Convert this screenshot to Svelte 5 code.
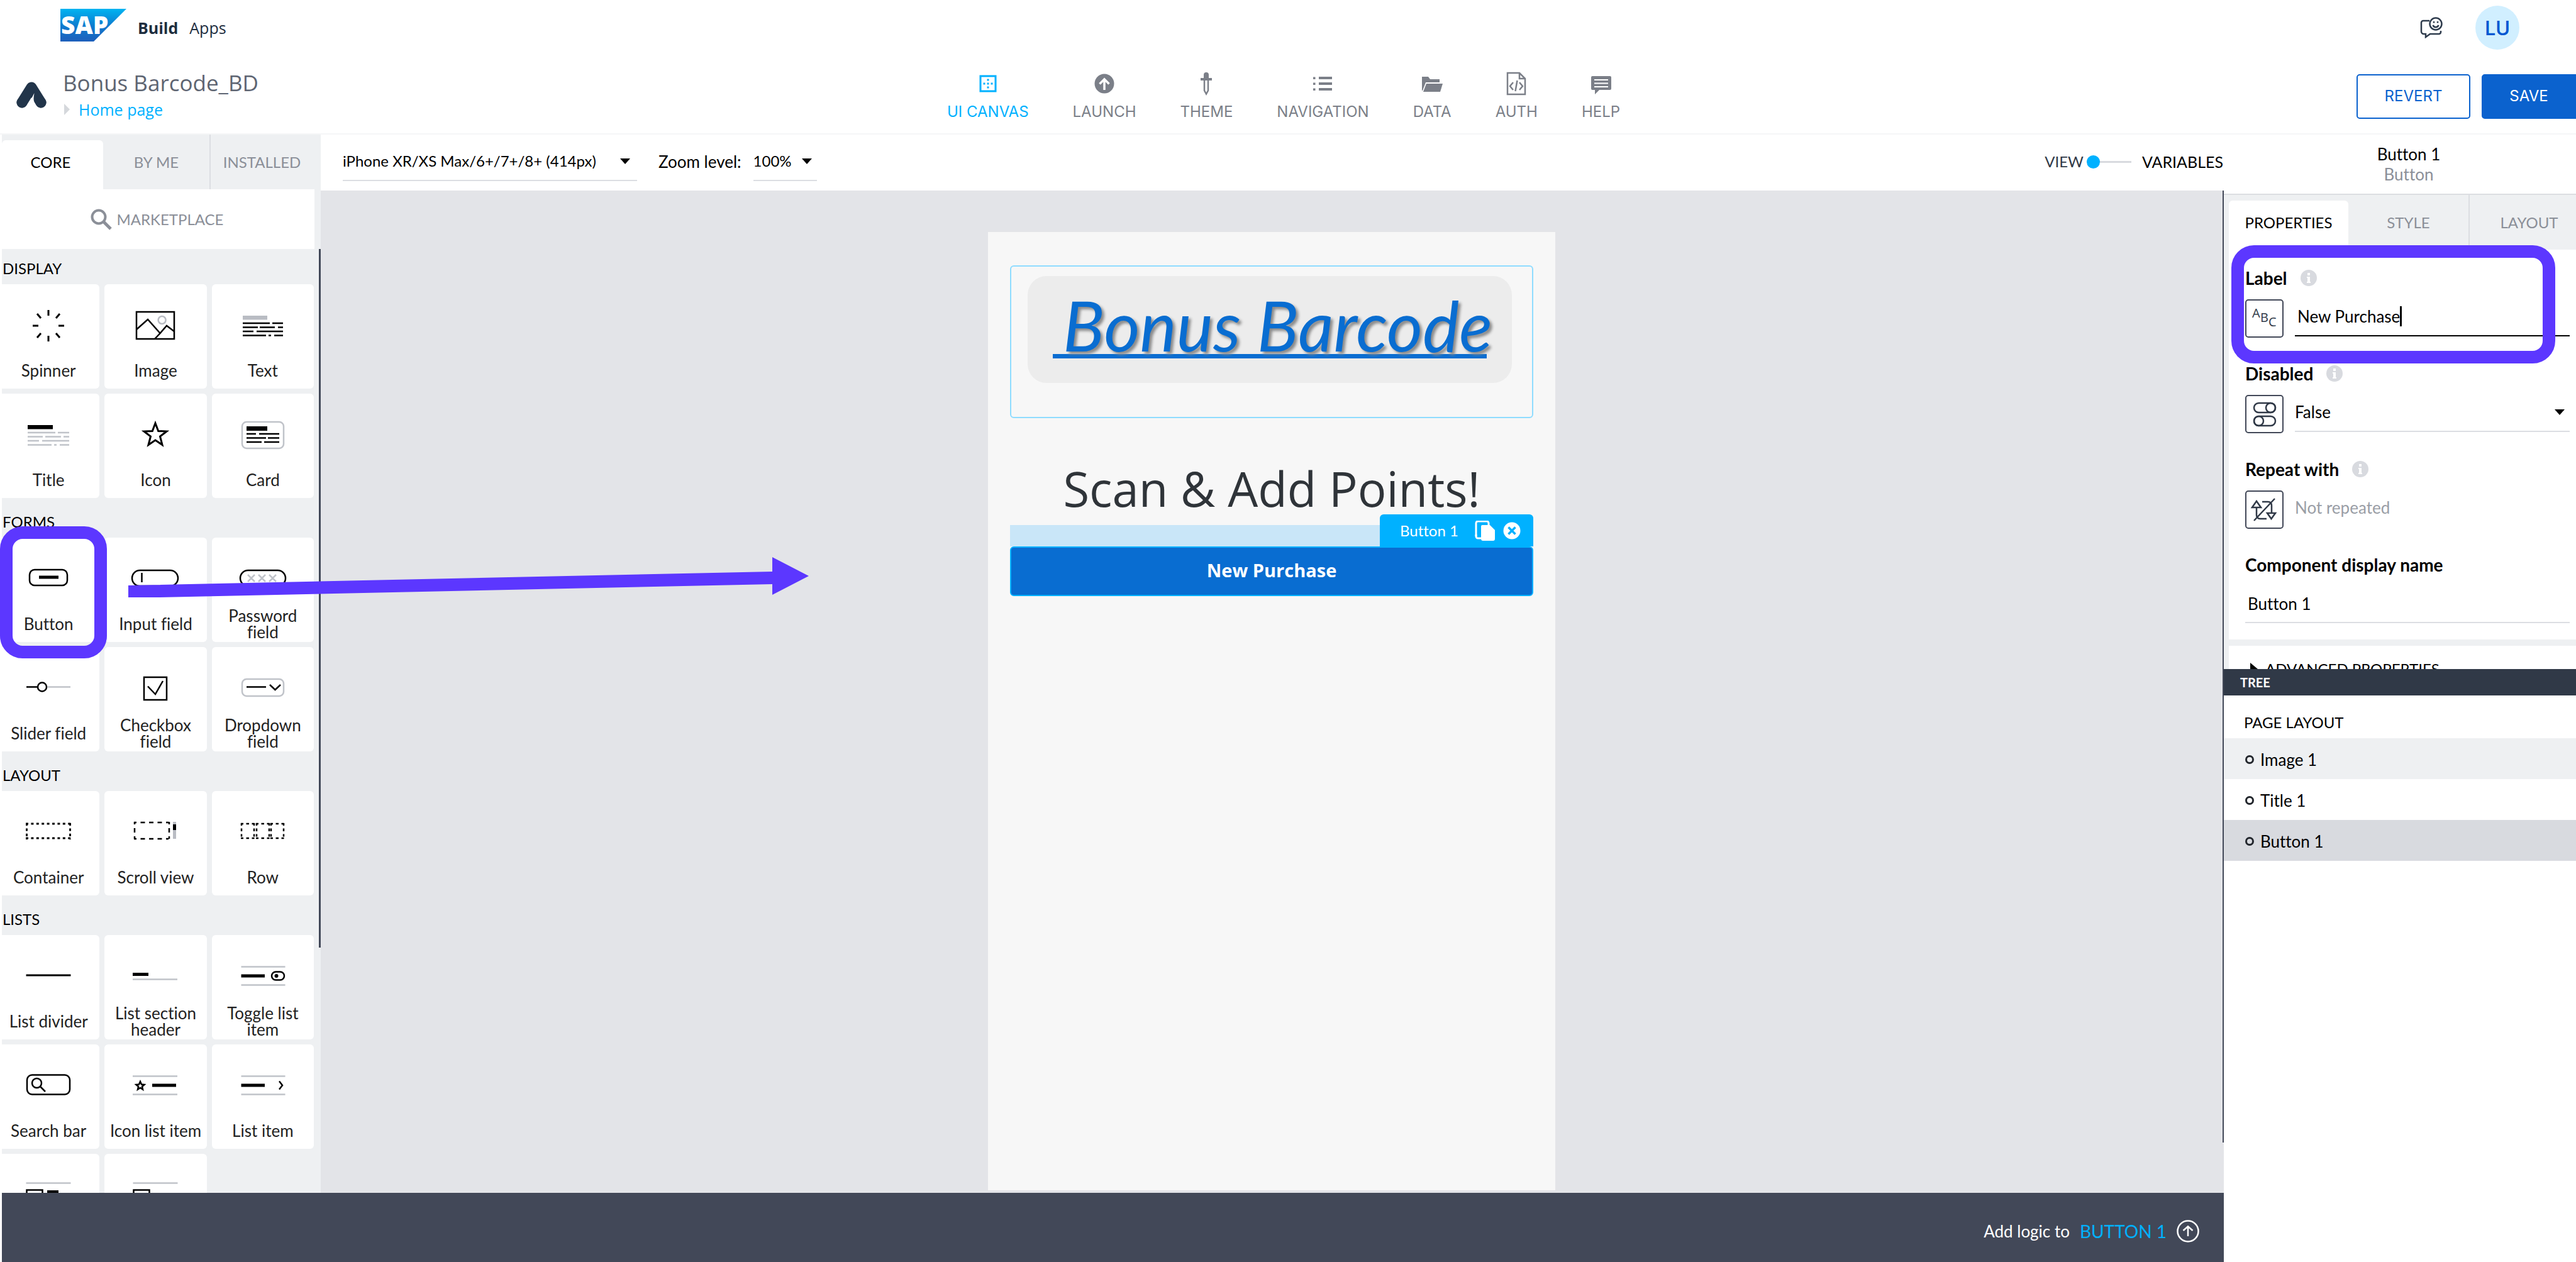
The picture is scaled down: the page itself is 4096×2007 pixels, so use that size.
<script>
  const navItems = [
    { id: 'canvas', label: 'UI CANVAS', active: true },
    { id: 'launch', label: 'LAUNCH' },
    { id: 'theme', label: 'THEME' },
    { id: 'navigation', label: 'NAVIGATION' },
    { id: 'data', label: 'DATA' },
    { id: 'auth', label: 'AUTH' },
    { id: 'help', label: 'HELP' }
  ];

  const sections = [
    { title: 'DISPLAY', items: ['Spinner', 'Image', 'Text', 'Title', 'Icon', 'Card'] },
    {
      title: 'FORMS',
      items: ['Button', 'Input field', 'Password field', 'Slider field', 'Checkbox field', 'Dropdown field']
    },
    { title: 'LAYOUT', items: ['Container', 'Scroll view', 'Row'] },
    {
      title: 'LISTS',
      items: ['List divider', 'List section header', 'Toggle list item', 'Search bar', 'Icon list item', 'List item'],
      partial: ['Large image list item', 'Image list item']
    }
  ];

  const tree = [
    { name: 'Image 1', tone: 'hover' },
    { name: 'Title 1', tone: '' },
    { name: 'Button 1', tone: 'selected' }
  ];

  let label = $state('New Purchase');
  let displayName = $state('Button 1');
</script>

{#snippet navIcon(id)}
  <svg class="nav-icon" viewBox="0 0 40 40" fill="currentColor" aria-hidden="true">
    {#if id === 'canvas'}
      <rect x="8" y="8" width="24" height="24" fill="none" stroke="currentColor" stroke-width="3" />
      <path d="M18.5 12.500h3v3h-3zM18.500 18.500h3v3h-3zM18.500 24.500h3v3h-3zM12.500 18.500h3v3h-3zM24.500 18.500h3v3h-3z" />
    {:else if id === 'launch'}
      <circle cx="20" cy="20" r="15.500" />
      <path d="M20 30V13M12.500 20.500L20 13l7.500 7.500" fill="none" stroke="#fff" stroke-width="3.500" />
    {:else if id === 'theme'}
      <path d="M16 11V6a4 4 0 0 1 8 0v5h5v4H11v-4z" />
      <path d="M17 15v16l3 5.500 3-5.500V15" fill="none" stroke="currentColor" stroke-width="2.500" />
    {:else if id === 'navigation'}
      <path d="M5 9.500h3.500V13H5zM5 18.500h3.500V22H5zM5 27.500h3.500V31H5zM14 9h21v4H14zM14 18h21v4H14zM14 27h21v4H14z" />
    {:else if id === 'data'}
      <path d="M4 9h10l3 4h15v5H10l-5 13H4z" />
      <path d="M11 20h26l-4 13H6z" />
    {:else if id === 'auth'}
      <path d="M6 3h19l9 9v25H6zM25 3v9h9" fill="none" stroke="currentColor" stroke-width="2.500" />
      <path d="M15 18l-5 6 5 6M25 18l5 6-5 6M21.500 15l-3 17" fill="none" stroke="currentColor" stroke-width="2.500" />
    {:else}
      <path d="M6 8h28a2 2 0 0 1 2 2v18a2 2 0 0 1-2 2H17l-7 7v-7H6a2 2 0 0 1-2-2V10a2 2 0 0 1 2-2z" />
      <path d="M9 14h22M9 19.500h22M9 25h22" stroke="#fff" stroke-width="2" />
    {/if}
  </svg>
{/snippet}

{#snippet tileIcon(name)}
  <svg class="tile-icon" viewBox="-50 -26 100 52" fill="none" stroke="#000" stroke-width="2.500" aria-hidden="true">
    {#if name === 'Spinner'}
      <path stroke-width="3" d="M0-25v9M0 16v9M-25 0h9M16 0h9M-18-19l6 7M18-19l-6 7M-18 19l6-7M18 19l-6-7" />
    {:else if name === 'Image'}
      <rect x="-30" y="-22" width="60" height="43" />
      <path d="M-30 6l18-16L7.600 12-1 21M7.600 12L18 0l12 9" />
      <circle cx="10.600" cy="-9" r="6" stroke="#b9bcc3" />
    {:else if name === 'Text'}
      <path class="grey-fill" d="M-32-16H7v6.500h-39z" />
      <path d="M-32-4h43M15-4h17M-32 2.500h24M-5 2.500h24M24 2.500h8M-32 9h17M-10 9h42M-32 15.500H5M9 15.500h4M18 15.500h14" />
    {:else if name === 'Title'}
      <path d="M-33-16H7v6.500h-40z" fill="#000" stroke="none" />
      <path class="grey" d="M-33-4h44M15-4h18M-33 2.500h24M-5 2.500h25M24 2.500h9M-33 9h18M-10 9h43M-33 15.500H5M9 15.500h4M18 15.500h15" />
    {:else if name === 'Icon'}
      <path stroke-width="3" d="M0-19l4.700 12.500L18-6 7.500 2 11 15.500 0 8-11 15.500-7.500 2-18-6l13.300-.5z" />
    {:else if name === 'Card'}
      <rect class="grey" x="-33" y="-21" width="66" height="42" rx="7" />
      <path d="M-26-14H7v7h-33z" fill="#000" stroke="none" />
      <path d="M-26-2h15M-6-2h32M-26 4.500H5M8 4.500h18M-26 11h24M2 11h24" />
    {:else if name === 'Button'}
      <rect x="-30" y="-15" width="60" height="25" rx="8" />
      <path d="M-15-3h31" stroke-width="5" />
    {:else if name === 'Input field'}
      <rect x="-37" y="-14" width="73" height="25" rx="12.500" />
      <path d="M-21.500-10V5" />
    {:else if name === 'Password field'}
      <rect x="-36" y="-14" width="72" height="25" rx="12.500" />
      <path class="grey" d="M-24-7l11 11M-13-7l-11 11M-7-7L4 4M4-7L-7 4M10-7l11 11M21-7L10 4" />
    {:else if name === 'Slider field'}
      <path d="M-35-2.500h18" />
      <circle cx="-10" cy="-2.500" r="7" />
      <path class="grey" d="M-2-2.500h37" />
    {:else if name === 'Checkbox field'}
      <rect x="-18" y="-18" width="36" height="36" />
      <path d="M-12-3.500L0 9l12-21" />
    {:else if name === 'Dropdown field'}
      <rect class="grey" x="-33" y="-15" width="66" height="27" rx="7" />
      <path d="M-26-2.500H5M11-6l8.500 8L28-6" />
    {:else if name === 'Container'}
      <path stroke-dasharray="4 4.400" stroke-width="3" d="M-36-14h72M-36 9h72M-34.500-15v26M34.500-15v26" />
    {:else if name === 'Scroll view'}
      <path stroke-dasharray="4 6.500 7 6.500 7 6.500 7 6.500 4 20" d="M-34-16h64M-34 10h64" />
      <path stroke-dasharray="4 6 7 6 4 20" d="M-33-17v32M22-17v32" />
      <path d="M28-17h5v27h-5z" class="grey-fill" />
      <path d="M28-13h5v9h-5z" fill="#000" stroke="none" />
    {:else if name === 'Row'}
      {#each [-34, -10, 13] as x}
        <path stroke-dasharray="4 4.500 4.500 4.500 4 20" d="M{x - 1}-14h23M{x - 1} 9h23M{x}-15v26M{x + 20}-15v26" />
      {/each}
    {:else if name === 'List divider'}
      <path stroke-width="3" d="M-35.500-2h71" />
    {:else if name === 'List section header'}
      <path d="M-36-3.500h25" stroke-width="5" />
      <path class="grey" d="M-36 4.500h71" />
    {:else if name === 'Toggle list item'}
      <path class="grey" d="M-34.500-15.500h70M-34.500 13.500h70" />
      <path d="M-34.500-1H3" stroke-width="5" />
      <rect x="14" y="-7.500" width="20" height="13" rx="6.500" />
      <circle cx="21.500" cy="-1" r="3" fill="#000" stroke="none" />
    {:else if name === 'Search bar'}
      <rect x="-34" y="-17.500" width="68" height="31" rx="8" />
      <circle cx="-18.500" cy="-4.500" r="7.500" />
      <path d="M-13 1l8 8" />
    {:else if name === 'Icon list item'}
      <path class="grey" d="M-36-15.500h71M-36 13.500h71" />
      <path d="M-24-7l2 4.500 4.500.5-3.500 3 1 4.500-4-2.500-4 2.500 1-4.500-3.500-3 4.500-.5z" />
      <path d="M-5-1h38" stroke-width="5" />
    {:else if name === 'List item'}
      <path class="grey" d="M-34.500-15.500h70M-34.500 13.500h70" />
      <path d="M-34.500-1H3" stroke-width="5" />
      <path d="M26-7.500l5 6.500-5 6.500" />
    {:else}
      <path class="grey" d="M-35.500-19.500h71" />
      <rect x="-34.500" y="-8.500" width="25" height="22" />
      {#if name === 'Large image list item'}
        <path d="M-2-5.500h18" stroke-width="5" />
      {/if}
    {/if}
  </svg>
{/snippet}

{#snippet info()}
  <svg class="info" viewBox="0 0 26 26" aria-hidden="true">
    <circle cx="13" cy="13" r="13" fill="#d8dadf" />
    <path d="M11 5h4v4h-4zM10 11h5v8h1v2h-6v-2h1v-6h-1z" fill="#fff" />
  </svg>
{/snippet}

{#snippet caret()}
  <svg class="caret" viewBox="0 0 16 9" aria-hidden="true"><path d="M0 0h16L8 9z" /></svg>
{/snippet}

<div class="app">
  <header>
    <div class="shell">
      <div class="product">
        <svg class="sap" viewBox="0 0 105 52" role="img" aria-label="SAP">
          <defs>
            <linearGradient id="sap-blue" x1="0" y1="0" x2="0" y2="1">
              <stop offset="0" stop-color="#00b4f1" />
              <stop offset="0.500" stop-color="#0d7dd0" />
              <stop offset="1" stop-color="#1d5fbb" />
            </linearGradient>
          </defs>
          <path d="M0 0h105L53 52H0z" fill="url(#sap-blue)" />
          <text x="1" y="40" class="sap-text">SAP</text>
        </svg>
        <strong>Build</strong>
        <span>Apps</span>
      </div>
      <div class="user">
        <button class="feedback" aria-label="Feedback">
          <svg viewBox="0 0 36 34" fill="none" stroke="#2f3c4d" stroke-width="2.500">
            <path d="M15 6H5a3 3 0 0 0-3 3v14a4 4 0 0 0 4 4h3v5l7-5h14a3 3 0 0 0 3-3v-2" />
            <circle cx="25" cy="11" r="9.500" />
            <path d="M20.500 13a4.800 4.800 0 0 0 9 0" />
            <path d="M22 7v2.500M28 7v2.500" />
          </svg>
        </button>
        <button class="avatar">LU</button>
      </div>
    </div>

    <div class="toolbar">
      <div class="project">
        <svg class="mark" viewBox="0 0 48 42" aria-hidden="true">
          <path d="M9 33L24 9l15 24" fill="none" stroke="#22354a" stroke-width="17" stroke-linecap="round" stroke-linejoin="round" />
          <path d="M28.500 18q-1 6-1 9 0 6 5 15H16z" fill="#fff" />
          <circle cx="9" cy="33" r="8.500" fill="#22354a" />
          <path d="M9 33L24 9" stroke="#22354a" stroke-width="14" stroke-linecap="round" />
          <circle cx="39" cy="33" r="8.500" fill="#22354a" />
        </svg>
        <div>
          <h1>Bonus Barcode_BD</h1>
          <a class="crumb" href="#home">
            <svg viewBox="0 0 9 18" aria-hidden="true"><path d="M0 0l9 9-9 9z" fill="#d5d8dc" /></svg>
            Home page
          </a>
        </div>
      </div>
      <nav>
        {#each navItems as item}
          <a href="#{item.id}" class:active={item.active}>
            {@render navIcon(item.id)}
            {item.label}
          </a>
        {/each}
      </nav>
      <div class="actions">
        <button class="revert">REVERT</button>
        <button class="save">SAVE</button>
      </div>
    </div>
  </header>

  <main>
    <aside class="library">
      <div class="tabs lib-tabs">
        <button class="tab on">CORE</button>
        <button class="tab">BY ME</button>
        <button class="tab ruled">INSTALLED</button>
      </div>
      <button class="market">
        <svg viewBox="0 0 34 34" fill="none" stroke="#8b8f98" aria-hidden="true">
          <circle cx="13" cy="13" r="10.500" stroke-width="4" />
          <path d="M21 21l11 11" stroke-width="5" />
        </svg>
        MARKETPLACE
      </button>
      <div class="scroller">
        <div class="sections">
          {#each sections as section}
            <section>
              <h2>{section.title}</h2>
              <div class="tiles">
                {#each section.items as item}
                  <button class="tile">
                    {@render tileIcon(item)}
                    <span>{item}</span>
                  </button>
                {/each}
                {#each section.partial ?? [] as item}
                  <button class="tile" aria-label={item}>{@render tileIcon(item)}</button>
                {/each}
              </div>
            </section>
          {/each}
        </div>
        <div class="rail"></div>
      </div>
    </aside>

    <section class="stage">
      <div class="stage-bar">
        <div class="pick device">
          <select aria-label="Device">
            <option>iPhone XR/XS Max/6+/7+/8+ (414px)</option>
          </select>
          {@render caret()}
        </div>
        <label for="zoom">Zoom level:</label>
        <div class="pick zoom">
          <select id="zoom"><option>100%</option></select>
          {@render caret()}
        </div>
        <div class="mode">
          <label for="mode">VIEW</label>
          <input id="mode" type="range" min="0" max="1" value="0" />
          <span>VARIABLES</span>
        </div>
      </div>

      <div class="canvas">
        <div class="phone">
          <div class="image-box">
            <div class="plate"><span>Bonus Barcode</span></div>
          </div>
          <p class="headline">Scan &amp; Add Points!</p>
          <div class="drop-zone">
            <div class="tag">
              <span>Button 1</span>
              <svg class="copy" viewBox="0 0 32 32" aria-label="Duplicate">
                <path d="M2 25V4a3 3 0 0 1 3-3h14a3 3 0 0 1 3 3v3" fill="none" stroke="#fff" stroke-width="3" />
                <path d="M2 22v3a3 3 0 0 0 3 3h5" fill="none" stroke="#fff" stroke-width="3" />
                <path d="M12 7h12l8 8v14a3 3 0 0 1-3 3H13a3 3 0 0 1-3-3V9a2 2 0 0 1 2-2z" fill="#fff" />
              </svg>
              <svg class="close" viewBox="0 0 28 28" aria-label="Remove">
                <circle cx="14" cy="14" r="13.500" fill="#fff" />
                <path d="M8.500 8.500l11 11M19.500 8.500l-11 11" stroke="#00b1ff" stroke-width="3.500" />
              </svg>
            </div>
          </div>
          <button class="purchase">New Purchase</button>
        </div>
        <div class="rail"></div>
      </div>
    </section>

    <footer>
      <span>Add logic to</span>
      <button>BUTTON 1</button>
      <svg viewBox="0 0 36 36" fill="none" stroke="#fff" stroke-width="2.500" aria-hidden="true">
        <circle cx="18" cy="18" r="16.500" />
        <path d="M18 26V11M10.500 17l7.500-6.500 7.500 6.500" />
      </svg>
    </footer>

    <aside class="inspector">
      <div class="wide">
        <div class="subject">
          <strong>Button 1</strong>
          <span>Button</span>
        </div>
        <div class="tabs insp-tabs">
          <button class="tab on">PROPERTIES</button>
          <button class="tab">STYLE</button>
          <button class="tab ruled">LAYOUT</button>
        </div>
      </div>

      <div class="props">
        <div class="field">
          <div class="caption"><label for="f-label">Label</label>{@render info()}</div>
          <div class="row">
            <button class="kind" aria-label="Text binding">
              <svg viewBox="0 0 57 57" fill="#303947">
                <text x="9" y="27" class="abc">A</text>
                <text x="22" y="34" class="abc">B</text>
                <text x="35" y="41" class="abc">C</text>
              </svg>
            </button>
            <div class="line focus">
              <input id="f-label" type="text" bind:value={label} />
              <i class="cursor"></i>
            </div>
          </div>
        </div>
        <div class="field">
          <div class="caption"><label for="f-disabled">Disabled</label>{@render info()}</div>
          <div class="row">
            <button class="kind" aria-label="Boolean binding">
              <svg viewBox="0 0 57 57" fill="none" stroke="#303947" stroke-width="2.500">
                <rect x="12" y="11" width="34" height="15" rx="7.500" />
                <circle cx="38.500" cy="18.500" r="7.500" />
                <rect x="12" y="32" width="34" height="15" rx="7.500" />
                <circle cx="19.500" cy="39.500" r="7.500" />
              </svg>
            </button>
            <div class="line">
              <select id="f-disabled"><option>False</option></select>
              {@render caret()}
            </div>
          </div>
        </div>
        <div class="field">
          <div class="caption"><span>Repeat with</span>{@render info()}</div>
          <div class="row">
            <button class="kind" aria-label="Repeat binding">
              <svg viewBox="0 0 57 57" fill="none" stroke="#303947" stroke-width="2.500">
                <path d="M9 25l7-10 7 10zM16 25v12q0 6 6 6h10M25 16h9q6 0 6 6v12M33 34h13l-6.500 9zM45 11L12 46" />
              </svg>
            </button>
            <div class="line bare">Not repeated</div>
          </div>
        </div>
        <div class="field last">
          <div class="caption"><label for="f-name">Component display name</label></div>
          <div class="line inset"><input id="f-name" type="text" bind:value={displayName} /></div>
        </div>
      </div>

      <button class="advanced">
        <svg viewBox="0 0 12 20" aria-hidden="true"><path d="M0 0l12 10L0 20z" /></svg>
        ADVANCED PROPERTIES
      </button>

      <div class="tree">
        <h2>TREE</h2>
        <h3>PAGE LAYOUT</h3>
        <ul>
          {#each tree as node}
            <li class={node.tone}><button><i></i>{node.name}</button></li>
          {/each}
        </ul>
      </div>
    </aside>
  </main>

  <div class="ring ring-tile"></div>
  <div class="ring ring-label"></div>
  <svg class="arrow" viewBox="0 0 1082 64" aria-hidden="true">
    <path d="M0 45L1024 23V0l58 30-58 30V43L0 65z" fill="#5c37ff" />
  </svg>
</div>

<style>
  :global(body) {
    margin: 0;
    overflow: hidden;
  }

  .app {
    position: relative;
    display: flex;
    flex-direction: column;
    height: 100vh;
    overflow: hidden;
    background: #fff;
    color: #000;
    font-family: Lato, 'Open Sans', sans-serif;
    font-size: 26px;
    font-variant-ligatures: none;
    line-height: 32px;
  }

  .app * {
    box-sizing: border-box;
  }

  button,
  input,
  select {
    margin: 0;
    padding: 0;
    border: 0;
    border-radius: 0;
    background: none;
    color: inherit;
    font: inherit;
    outline: 0;
    appearance: none;
  }

  a {
    color: inherit;
    text-decoration: none;
  }

  h1,
  h2,
  h3,
  p,
  ul {
    margin: 0;
    padding: 0;
    font-weight: 400;
    list-style: none;
  }

  svg {
    display: block;
    flex: none;
  }

  /* ---------- header ---------- */
  header {
    flex: none;
    border-bottom: 2px solid #f5f6f7;
    font-family: 'Open Sans', 'Noto Sans', sans-serif;
  }

  .shell {
    display: flex;
    justify-content: space-between;
    height: 88px;
    padding: 0 90px 0 96px;
  }

  .product {
    display: flex;
    align-items: center;
    color: #1d2d3e;
    font-size: 25px;
    gap: 18px;
  }

  .product strong {
    font-weight: 700;
  }

  .sap {
    width: 105px;
    height: 52px;
    margin-bottom: 8px;
  }

  .sap-text {
    fill: #fff;
    font-family: 'Open Sans', sans-serif;
    font-size: 39px;
    font-weight: 800;
  }

  .user {
    display: flex;
    align-items: center;
    gap: 52px;
  }

  .feedback svg {
    width: 36px;
    height: 34px;
  }

  .avatar {
    width: 70px;
    height: 70px;
    border-radius: 50%;
    background: #d1efff;
    color: #0057d2;
    font-size: 32px;
    font-weight: 600;
  }

  .toolbar {
    display: grid;
    grid-template-columns: 1fr auto 1fr;
    align-items: center;
    height: 124px;
    padding-top: 6px;
  }

  .project {
    display: flex;
    align-items: center;
    gap: 26px;
    padding: 0 0 4px 26px;
  }

  .mark {
    width: 48px;
    height: 42px;
  }

  h1 {
    color: #5e6572;
    font-size: 35px;
    line-height: 46px;
  }

  .crumb {
    display: flex;
    align-items: center;
    gap: 14px;
    padding-left: 2px;
    color: #00b1ff;
    font-size: 25px;
    line-height: 38px;
  }

  .crumb svg {
    width: 9px;
    height: 18px;
  }

  nav {
    display: flex;
    gap: 70px;
    margin-right: 14px;
    color: #7b7f88;
    font-family: Inter, 'Open Sans', sans-serif;
    font-size: 24px;
  }

  nav a {
    display: flex;
    flex-direction: column;
    align-items: center;
    gap: 9px;
  }

  nav .active {
    color: #00b1ff;
  }

  .nav-icon {
    width: 40px;
    height: 40px;
  }

  .actions {
    display: flex;
    justify-content: flex-end;
    gap: 18px;
    font-family: Inter, 'Open Sans', sans-serif;
    font-size: 24px;
  }

  .actions button {
    height: 71px;
    border: 2px solid #0b62ce;
  }

  .revert {
    width: 181px;
    border-radius: 5px;
    color: #0b62ce;
  }

  .save {
    width: 150px;
    border-radius: 5px 0 0 5px;
    background: #0b62ce;
    color: #fff;
  }

  /* ---------- frame ---------- */
  main {
    display: grid;
    flex: 1;
    grid-template-columns: 507px 1fr 560px;
    grid-template-rows: 1fr 110px;
    min-height: 0;
    padding-left: 3px;
  }

  .tabs {
    display: grid;
    background: #eef0f2;
    color: #8b8f98;
    font-size: 24px;
  }

  .tab.on {
    margin-top: 9px;
    padding-bottom: 9px;
    border-radius: 6px 6px 0 0;
    background: #fff;
    color: #000;
  }

  .tab.ruled {
    border-left: 2px solid #dcdee2;
  }

  .rail {
    flex: none;
    width: 3px;
    background: #424858;
  }

  /* ---------- component library ---------- */
  .library {
    display: flex;
    flex-direction: column;
    min-height: 0;
    background: #eef0f2;
  }

  .lib-tabs {
    flex: none;
    grid-template-columns: 161px 169px 1fr;
    height: 87px;
  }

  .lib-tabs .on {
    padding-right: 6px;
  }

  .lib-tabs .ruled {
    padding-right: 12px;
  }

  .market {
    display: flex;
    flex: none;
    align-items: center;
    justify-content: center;
    gap: 8px;
    height: 95px;
    padding-right: 4px;
    margin-right: 10px;
    background: #fff;
    color: #8b8f98;
    font-size: 24px;
  }

  .market svg {
    width: 34px;
    height: 34px;
  }

  .scroller {
    display: flex;
    flex: 1;
    min-height: 0;
    overflow: hidden;
  }

  .scroller .rail {
    height: 74%;
  }

  .sections {
    display: flex;
    flex: 1;
    flex-direction: column;
    gap: 13px;
    padding: 6px 8px 0 0;
    overflow: hidden;
  }

  .sections h2 {
    padding-left: 1px;
    font-size: 24px;
    line-height: 50px;
  }

  .tiles {
    display: grid;
    grid-template-columns: repeat(3, 1fr);
    gap: 8px;
    margin-left: -7px;
  }

  .tile {
    display: flex;
    flex-direction: column;
    align-items: center;
    height: 166px;
    padding: 40px 6px 0;
    border-radius: 6px;
    background: #fff;
    color: #222;
    line-height: 26px;
  }

  .tile-icon {
    width: 100px;
    height: 52px;
  }

  .tile span {
    display: flex;
    align-items: center;
    height: 52px;
    margin-top: 19px;
  }

  .grey {
    stroke: #c0c3c9;
  }

  .grey-fill {
    fill: #b9bcc3;
    stroke: none;
  }

  /* ---------- stage ---------- */
  .stage {
    display: flex;
    flex-direction: column;
    min-width: 0;
    min-height: 0;
  }

  .stage-bar {
    display: flex;
    flex: none;
    align-items: flex-start;
    height: 89px;
    padding: 24px 1px 0 35px;
    line-height: 38px;
  }

  .pick {
    display: flex;
    align-items: center;
    height: 50px;
    padding-bottom: 12px;
    border-bottom: 2px solid #dcdee2;
    font-size: 24px;
  }

  .pick select {
    flex: 1;
    min-width: 0;
  }

  .device {
    width: 468px;
    margin-right: 34px;
    padding-right: 11px;
  }

  .zoom {
    width: 101px;
    margin-left: 19px;
    padding-right: 8px;
  }

  .caret {
    width: 16px;
    height: 9px;
  }

  .mode {
    display: flex;
    align-items: center;
    margin-left: auto;
    font-size: 25px;
  }

  .mode label {
    color: #303947;
    font-size: 24px;
  }

  .mode input {
    width: 71px;
    height: 21px;
    margin: 0 17px 0 5px;
    background: linear-gradient(#d8dadf, #d8dadf) center / 100% 3px no-repeat;
  }

  .mode input::-webkit-slider-thumb {
    width: 21px;
    height: 21px;
    border-radius: 50%;
    background: #00b1ff;
    appearance: none;
  }

  .canvas {
    display: grid;
    flex: 1;
    grid-template-columns: 1fr auto 1fr;
    min-height: 0;
    background: #e3e4e8;
  }

  .canvas .rail {
    grid-column: 3;
    justify-self: end;
    width: 2px;
    height: 95%;
  }

  .phone {
    display: flex;
    grid-column: 2;
    flex-direction: column;
    width: 902px;
    margin: 66px 2px 4px 0;
    padding: 53px 35px 0;
    background: #f7f7f7;
  }

  .image-box {
    height: 243px;
    padding: 15px 32px 0 26px;
    border: 2px solid #8fdcff;
    border-radius: 6px;
  }

  .plate {
    display: flex;
    justify-content: center;
    height: 170px;
    padding-top: 14px;
    border-radius: 30px;
    background: #ececec;
  }

  .plate span {
    width: 690px;
    height: 117px;
    padding-left: 16px;
    border-bottom: 7px solid #096dd1;
    color: #096dd1;
    font-size: 110px;
    font-style: italic;
    line-height: 126px;
    text-shadow: 4px 4px 4px #8a8a8a;
    white-space: nowrap;
  }

  .headline {
    margin-top: 62px;
    color: #2f3439;
    font-family: 'Open Sans', 'Noto Sans', sans-serif;
    font-size: 76px;
    line-height: 100px;
    text-align: center;
    white-space: nowrap;
  }

  .drop-zone {
    display: flex;
    align-items: flex-end;
    justify-content: flex-end;
    height: 34px;
    margin-top: 8px;
    background: #c9e6f8;
  }

  .tag {
    display: flex;
    align-items: center;
    gap: 26px;
    width: 244px;
    height: 51px;
    padding-left: 32px;
    border-radius: 6px 6px 0 0;
    background: #00b1ff;
    color: #fff;
    font-size: 24px;
  }

  .copy {
    width: 32px;
    height: 32px;
  }

  .close {
    width: 28px;
    height: 28px;
    margin-left: -13px;
  }

  .purchase {
    height: 79px;
    padding-bottom: 4px;
    border: 2px solid #00b1ff;
    border-radius: 6px;
    background: #096dd1;
    color: #fff;
    font-family: 'Open Sans', 'Noto Sans', sans-serif;
    font-size: 29px;
    font-weight: 700;
  }

  /* ---------- logic bar ---------- */
  footer {
    display: flex;
    grid-row: 2;
    grid-column: 1 / 3;
    align-items: center;
    justify-content: flex-end;
    gap: 16px;
    padding: 12px 39px 0 0;
    background: #424858;
    color: #fff;
  }

  footer button {
    color: #00b1ff;
    font-size: 28px;
  }

  footer svg {
    width: 36px;
    height: 36px;
  }

  /* ---------- inspector ---------- */
  .inspector {
    display: flex;
    grid-row: 1 / 3;
    grid-column: 3;
    flex-direction: column;
    min-height: 0;
    overflow: hidden;
  }

  .wide {
    flex: none;
    margin-right: -28px;
  }

  .subject {
    display: flex;
    flex-direction: column;
    align-items: center;
    height: 96px;
    padding-top: 15px;
    border-bottom: 2px solid #dcdee2;
    color: #8b8f98;
  }

  .subject strong {
    color: #000;
    font-weight: 400;
  }

  .insp-tabs {
    grid-template-columns: 190px 191px 191px;
    height: 87px;
    padding-left: 8px;
  }

  .props {
    display: flex;
    flex: none;
    flex-direction: column;
    padding: 19px 10px 26px 26px;
    border: solid #eef0f2;
    border-width: 0 0 10px 8px;
  }

  .field {
    flex: none;
    height: 152px;
  }

  .field.last {
    height: 119px;
  }

  .caption {
    display: flex;
    align-items: center;
    gap: 21px;
    height: 52px;
    font-size: 28px;
    font-weight: 700;
  }

  .info {
    width: 26px;
    height: 26px;
  }

  .row {
    display: flex;
    gap: 18px;
    margin-top: 8px;
  }

  .kind {
    flex: none;
    width: 61px;
    height: 61px;
    border: 2px solid #424858;
    border-radius: 5px;
  }

  .kind svg {
    width: 57px;
    height: 57px;
  }

  .abc {
    font-family: 'Open Sans', sans-serif;
    font-size: 20px;
  }

  .line {
    display: flex;
    flex: 1;
    align-items: center;
    height: 59px;
    padding-bottom: 3px;
    border-bottom: 2px solid #dcdee2;
  }

  .line input {
    min-width: 0;
    width: 100%;
  }

  .line select {
    flex: 1;
  }

  .line .caret {
    margin-right: 8px;
  }

  .focus {
    padding-left: 4px;
    border-color: #000;
  }

  .focus input {
    width: auto;
    field-sizing: content;
  }

  .cursor {
    width: 3px;
    height: 32px;
    background: #000;
  }

  .bare {
    border-color: transparent;
    color: #9a9ea6;
  }

  .inset {
    height: 67px;
    padding: 6px 0 0 4px;
  }

  .advanced {
    display: flex;
    flex: none;
    align-items: center;
    gap: 12px;
    height: 37px;
    padding: 36px 0 0 34px;
    overflow: hidden;
    border-left: 8px solid #eef0f2;
    font-size: 24px;
  }

  .advanced svg {
    width: 12px;
    height: 20px;
  }

  .tree {
    z-index: 1;
    flex: 1;
    background: #fff;
  }

  .tree h2 {
    padding-left: 26px;
    background: #303947;
    color: #fff;
    font-size: 20px;
    font-weight: 700;
    line-height: 42px;
  }

  .tree h3 {
    padding: 18px 0 0 32px;
    font-size: 24px;
    line-height: 50px;
  }

  .tree li button {
    display: flex;
    align-items: center;
    gap: 10px;
    width: 100%;
    height: 65px;
    padding: 2px 0 0 34px;
  }

  .tree li i {
    width: 14px;
    height: 14px;
    border: 3px solid #22262c;
    border-radius: 50%;
  }

  .hover {
    background: #eef0f2;
  }

  .selected {
    background: #d8dadf;
  }

  /* ---------- callouts over the page ---------- */
  .ring {
    position: absolute;
    border: 20px solid #5c37ff;
    border-radius: 36px;
    pointer-events: none;
  }

  .ring-tile {
    top: 837px;
    left: 0;
    width: 170px;
    height: 210px;
  }

  .ring-label {
    top: 390px;
    right: 33px;
    width: 515px;
    height: 188px;
  }

  .arrow {
    position: absolute;
    top: 886px;
    left: 204px;
    width: 1082px;
    height: 64px;
    pointer-events: none;
  }
</style>
